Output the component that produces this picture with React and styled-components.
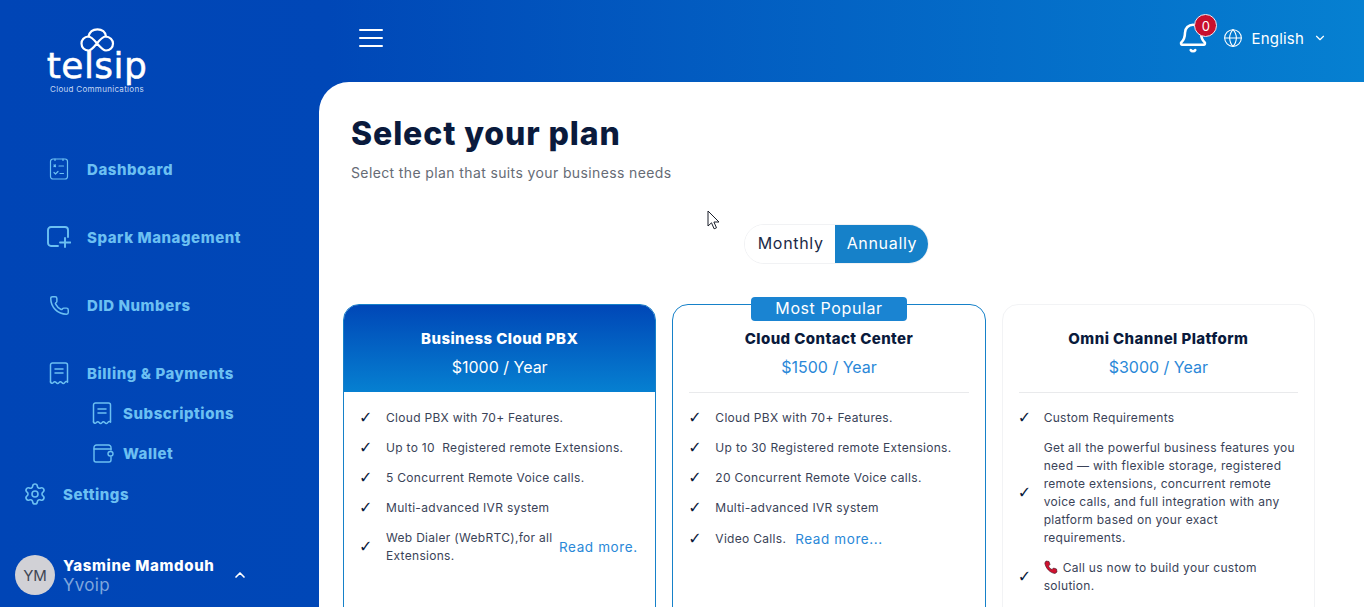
import React from 'react';
import styled, { createGlobalStyle } from 'styled-components';
import { Phone, Settings, ChevronUp, ChevronDown, Bell, Globe } from 'lucide-react';

const GlobalStyle = createGlobalStyle`
  html, body { margin: 0; padding: 0; height: 100%; overflow: hidden; }
  body { font-family: Inter, "Open Sans", "Liberation Sans", sans-serif; }
  * { box-sizing: border-box; }
`;

const Shell = styled.div`
  display: grid;
  grid-template-columns: 319px 1fr;
  height: 607px;
  overflow: hidden;
  background: linear-gradient(90deg, #0045b6 0%, #0047b7 24%, #0680d1 100%);
`;

/* sidebar */
const Sidebar = styled.aside`
  display: flex;
  flex-direction: column;
  height: 607px;
`;

const Logo = styled.div`
  display: flex;
  flex-direction: column;
  align-items: center;
  width: 194px;
  padding-top: 28px;
  height: 157px;
  color: #fff;
`;

const Wordmark = styled.div`
  font-family: "DejaVu Sans", sans-serif;
  font-size: 36px;
  line-height: 30px;
  letter-spacing: 0.4px;
  margin-top: -1px;
  -webkit-text-stroke: 0.5px #fff;
`;

const Tagline = styled.div`
  font-size: 8px;
  line-height: 10px;
  letter-spacing: 0.3px;
  margin-top: 3px;
  color: #c6d8f4;
`;

const Nav = styled.nav`
  display: flex;
  flex-direction: column;
`;

const NavItem = styled.a`
  display: flex;
  align-items: center;
  height: 24px;
  margin-bottom: ${p => p.$after || 0}px;
  padding-left: ${p => p.$left || 47}px;
  color: #6cc0f2;
  font-size: 15px;
  font-weight: 800;
  letter-spacing: 0.55px;
  svg { flex: none; }
`;

const NavIcon = styled.span`
  display: flex;
  justify-content: center;
  width: ${p => p.$w || 24}px;
  margin-right: ${p => p.$gap || 16}px;
`;

const UserRow = styled.div`
  display: flex;
  align-items: center;
  margin-top: 49px;
  padding-left: 15px;
`;

const Avatar = styled.div`
  display: flex;
  align-items: center;
  justify-content: center;
  width: 40px;
  height: 40px;
  border-radius: 50%;
  background: #d1d1d6;
  color: #3f4654;
  font-size: 15px;
`;

const UserText = styled.div`
  margin-left: 8px;
  width: 169px;
`;

const UserName = styled.div`
  color: #fff;
  font-size: 15px;
  font-weight: 800;
  line-height: 20px;
  letter-spacing: 0.65px;
`;

const UserOrg = styled.div`
  color: #7fa6dd;
  font-size: 17px;
  line-height: 19px;
  letter-spacing: 0.3px;
`;

/* right side */
const Main = styled.div`
  display: flex;
  flex-direction: column;
  min-width: 0;
`;

const Topbar = styled.header`
  display: flex;
  align-items: center;
  height: 82px;
  padding: 0 37px 6px 40px;
`;

const Burger = styled.div`
  display: flex;
  flex-direction: column;
  gap: 6px;
  width: 24px;
  span { display: block; height: 2px; background: #fff; border-radius: 1px; }
`;

const TopRight = styled.div`
  display: flex;
  align-items: center;
  margin-left: auto;
  color: #fff;
`;

const BellWrap = styled.div`
  position: relative;
  display: flex;
  margin-right: 14px;
`;

const BellBadge = styled.span`
  position: absolute;
  top: -8px;
  left: 17px;
  display: flex;
  align-items: center;
  justify-content: center;
  width: 23px;
  height: 23px;
  border-radius: 50%;
  background: #c8102e;
  border: 1px solid #e9eef6;
  color: #fff;
  font-size: 13px;
`;

const LangText = styled.span`
  margin: 0 9px 0 8px;
  font-size: 15px;
  letter-spacing: 0.2px;
`;

const Content = styled.main`
  position: relative;
  flex: 1;
  background: #fff;
  border-top-left-radius: 30px;
  padding: 32px 49px 0 24px;
  overflow: hidden;
`;

const Heading = styled.h1`
  margin: 0 0 0 8px;
  color: #0a1a3c;
  font-size: 32px;
  line-height: 40px;
  font-weight: 800;
  letter-spacing: 0.9px;
`;

const Sub = styled.p`
  margin: 9px 0 0 8px;
  color: #666b75;
  font-size: 14px;
  line-height: 20px;
  letter-spacing: 0.38px;
`;

const Pointer = styled.svg`
  position: absolute;
  left: 388px;
  top: 128px;
`;

const ToggleRow = styled.div`
  display: flex;
  justify-content: center;
  margin: 41px 0 40px;
  padding-left: 15px;
`;

const Toggle = styled.div`
  display: flex;
  height: 40px;
  border: 1px solid #f1f2f4;
  border-radius: 20px;
  overflow: hidden;
`;

const ToggleOption = styled.span`
  display: flex;
  align-items: center;
  padding: 0 11px 2px ${p => (p.$active ? 12 : 13)}px;
  background: ${p => (p.$active ? '#1681c9' : '#fff')};
  color: ${p => (p.$active ? '#fff' : '#1b2a47')};
  font-size: 16px;
  letter-spacing: 0.68px;
`;

const Cards = styled.div`
  display: grid;
  grid-template-columns: repeat(3, 1fr);
  gap: 16px;
`;

const Card = styled.section`
  position: relative;
  height: 360px;
  background: #fff;
  border: 1px solid ${p => (p.$variant === 'plain' ? '#f2f3f5' : '#1681c9')};
  border-radius: 16px;
  overflow: ${p => (p.$variant === 'popular' ? 'visible' : 'hidden')};
`;

const Badge = styled.div`
  position: absolute;
  top: -8px;
  left: 50%;
  transform: translateX(-50%);
  width: 156px;
  height: 24px;
  background: #1a84d2;
  border-radius: 4px;
  color: #fff;
  font-size: 16px;
  line-height: 23px;
  letter-spacing: 0.6px;
  text-align: center;
`;

const CardHead = styled.div`
  height: ${p => (p.$filled ? 87 : 88)}px;
  margin: ${p => (p.$filled ? '0' : '0 16px')};
  padding-top: 23px;
  text-align: center;
  color: ${p => (p.$filled ? '#fff' : '#0a1a3c')};
  background: ${p => (p.$filled ? 'linear-gradient(180deg, #0047b7 0%, #0680d1 100%)' : 'none')};
  border-bottom: ${p => (p.$filled ? 'none' : '1px solid #e9eaec')};
`;

const PlanName = styled.div`
  font-size: 15px;
  line-height: 22px;
  font-weight: 800;
  letter-spacing: 0.42px;
`;

const Price = styled.div`
  margin-top: 6px;
  font-size: 16px;
  line-height: 22px;
  color: ${p => (p.$filled ? '#fff' : '#2a88d8')};
`;

const Features = styled.ul`
  list-style: none;
  margin: 0;
  padding: ${p => (p.$filled ? 17 : 16)}px 16px 0 15px;
  display: flex;
  flex-direction: column;
  gap: 12px;
`;

const Feature = styled.li`
  display: flex;
  align-items: center;
  color: #3a4358;
  font-size: 12px;
  line-height: 18px;
  letter-spacing: 0.3px;
`;

const Tick = styled.span`
  flex: none;
  width: ${p => p.$w || 27}px;
  color: #0a1a3c;
  font-family: "DejaVu Sans", sans-serif;
  font-size: 16px;
  font-weight: 700;
  letter-spacing: 0;
`;

const FeatureText = styled.span`
  ${p => p.$width && `width: ${p.$width}px; flex: none;`}
`;

const ReadMore = styled.a`
  flex: none;
  margin-left: ${p => p.$gap || 12}px;
  color: #2a88d8;
  font-size: 13.5px;
  line-height: 20px;
  letter-spacing: 0.6px;
`;

const PhoneGlyph = styled.svg`
  vertical-align: -2px;
  margin-right: 5px;
`;

const iconProps = { fill: 'none', stroke: '#6cc0f2', strokeWidth: 1.5, strokeLinecap: 'round', strokeLinejoin: 'round' };

const ChecklistIcon = () => (
  <svg width="20" height="24" viewBox="0 0 20 24" {...iconProps} strokeWidth="1.2">
    <rect x="1.5" y="2" width="17" height="20" rx="2.5" />
    <path d="M6 2v1.5M14 2v1.5M5 8l1.5 1.5M6.5 8L5 9.5M10 9h4.5M5 15.5l1.5 1.500 2.500-2.500M11 16.500h3.500" />
  </svg>
);

const SquarePlusIcon = () => (
  <svg width="24" height="22" viewBox="0 0 24 22" {...iconProps} strokeWidth="1.9">
    <path d="M11 20H4a3 3 0 0 1-3-3V4a3 3 0 0 1 3-3h14a3 3 0 0 1 3 3v7" />
    <path d="M18 12v9M13 16.500H23.500" />
  </svg>
);

const ReceiptIcon = () => (
  <svg width="20" height="23" viewBox="0 0 20 23" {...iconProps}>
    <path d="M1.500 20V3a2 2 0 0 1 2-2h13a2 2 0 0 1 2 2v17" />
    <path d="M1.500 20q1.400 2.400 2.800 .6t2.900 0 2.800 0 2.800 0 2.900 0 2.800 -.6" />
    <path d="M6 7h8M6 11h8" />
  </svg>
);

const WalletIcon = () => (
  <svg width="21" height="19" viewBox="0 0 21 19" {...iconProps} strokeWidth="1.4">
    <path d="M18 6V3.500A2.500 2.500 0 0 0 15.500 1H3.500A2.500 2.500 0 0 0 1 3.500V16a2 2 0 0 0 2 2h13a2 2 0 0 0 2-2v-3" />
    <path d="M1 5h17" />
    <rect x="15" y="7.500" width="5" height="4.500" rx="2.200" />
  </svg>
);

const plans = [
  {
    name: 'Business Cloud PBX',
    price: '$1000 / Year',
    variant: 'filled',
    features: [
      'Cloud PBX with 70+ Features.',
      'Up to 10 \u00a0Registered remote Extensions.',
      '5 Concurrent Remote Voice calls.',
      'Multi-advanced IVR system',
    ],
    last: { text: 'Web Dialer (WebRTC),for all Extensions.', width: 168, link: 'Read more.', gap: 5 },
  },
  {
    name: 'Cloud Contact Center',
    price: '$1500 / Year',
    variant: 'popular',
    features: [
      'Cloud PBX with 70+ Features.',
      'Up to 30 Registered remote Extensions.',
      '20 Concurrent Remote Voice calls.',
      'Multi-advanced IVR system',
    ],
    last: { text: 'Video Calls.', link: 'Read more...', gap: 9 },
  },
];

const FeatureRow = ({ children, tick }) => (
  <Feature>
    <Tick $w={tick}>✓</Tick>
    {children}
  </Feature>
);

const PlanCard = ({ plan }) => {
  const filled = plan.variant === 'filled';
  return (
    <Card $variant={plan.variant}>
      {plan.variant === 'popular' && <Badge>Most Popular</Badge>}
      <CardHead $filled={filled}>
        <PlanName>{plan.name}</PlanName>
        <Price $filled={filled}>{plan.price}</Price>
      </CardHead>
      <Features $filled={filled}>
        {plan.features.map(f => <FeatureRow key={f}>{f}</FeatureRow>)}
        <FeatureRow>
          <FeatureText $width={plan.last.width}>{plan.last.text}</FeatureText>
          <ReadMore $gap={plan.last.gap}>{plan.last.link}</ReadMore>
        </FeatureRow>
      </Features>
    </Card>
  );
};

export default function App() {
  return (
    <Shell>
      <GlobalStyle />
      <Sidebar>
        <Logo>
          <svg width="35" height="24" viewBox="0 0 35 24" fill="none" stroke="#fff" strokeWidth="2.200" strokeLinecap="round">
            <path d="M8.500 8.500C4 8.500 1.500 12 1.500 15.500C1.500 19.500 4.500 22.500 8.500 22.500C14 22.500 19.500 8.500 25.500 8.500C30 8.500 33 12 33 15.500C33 19.500 30 22.500 26 22.500C20 22.500 14 8.500 8.500 8.500" />
            <path d="M8.500 8.500C9.500 4 13 1.300 17.500 1.300C22 1.300 25.500 4 26 8.500" />
          </svg>
          <Wordmark>telsip</Wordmark>
          <Tagline>Cloud Communications</Tagline>
        </Logo>
        <Nav>
          <NavItem $after={44}><NavIcon><ChecklistIcon /></NavIcon>Dashboard</NavItem>
          <NavItem $after={44}><NavIcon><SquarePlusIcon /></NavIcon>Spark Management</NavItem>
          <NavItem $after={44}><NavIcon><Phone size={21} strokeWidth={1.7} /></NavIcon>DID Numbers</NavItem>
          <NavItem $after={16}><NavIcon><ReceiptIcon /></NavIcon>Billing &amp; Payments</NavItem>
          <NavItem $after={16} $left={91}><NavIcon $w={22} $gap={10}><ReceiptIcon /></NavIcon>Subscriptions</NavItem>
          <NavItem $after={17} $left={92}><NavIcon $w={22} $gap={9}><WalletIcon /></NavIcon>Wallet</NavItem>
          <NavItem $left={24}><NavIcon $w={22} $gap={17}><Settings size={24} strokeWidth={1.6} /></NavIcon>Settings</NavItem>
        </Nav>
        <UserRow>
          <Avatar>YM</Avatar>
          <UserText>
            <UserName>Yasmine Mamdouh</UserName>
            <UserOrg>Yvoip</UserOrg>
          </UserText>
          <ChevronUp size={16} color="#fff" strokeWidth={2.5} />
        </UserRow>
      </Sidebar>
      <Main>
        <Topbar>
          <Burger><span /><span /><span /></Burger>
          <TopRight>
            <BellWrap>
              <Bell size={32} strokeWidth={1.9} />
              <BellBadge>0</BellBadge>
            </BellWrap>
            <Globe size={20} strokeWidth={1.3} />
            <LangText>English</LangText>
            <ChevronDown size={14} />
          </TopRight>
        </Topbar>
        <Content>
          <Heading>Select your plan</Heading>
          <Sub>Select the plan that suits your business needs</Sub>
          <Pointer width="14" height="21" viewBox="0 0 14 21">
            <path d="M1 1v15l3.500-3.200 2.600 6 2.400-1-2.600-5.800H12z" fill="#fff" stroke="#1a1f2b" strokeWidth="1" />
          </Pointer>
          <ToggleRow>
            <Toggle>
              <ToggleOption>Monthly</ToggleOption>
              <ToggleOption $active>Annually</ToggleOption>
            </Toggle>
          </ToggleRow>
          <Cards>
            {plans.map(p => <PlanCard key={p.name} plan={p} />)}
            <Card $variant="plain">
              <CardHead>
                <PlanName>Omni Channel Platform</PlanName>
                <Price>$3000 / Year</Price>
              </CardHead>
              <Features>
                <FeatureRow tick={26}>Custom Requirements</FeatureRow>
                <FeatureRow tick={26}>
                  <FeatureText>Get all the powerful business features you need — with flexible storage, registered remote extensions, concurrent remote voice calls, and full integration with any platform based on your exact requirements.</FeatureText>
                </FeatureRow>
                <FeatureRow tick={26}>
                  <FeatureText>
                    <PhoneGlyph width="14" height="14" viewBox="0 0 14 14">
                      <path d="M2 1l3 .5 1 3-1.500 1.500c.8 1.800 2 3 3.500 3.500L9.500 8l3 1 .5 3-2 1.500C6 13 1.500 8 .8 3z" fill="#d0122f" stroke="#3a1020" strokeWidth=".6" />
                    </PhoneGlyph>
                    Call us now to build your custom solution.
                  </FeatureText>
                </FeatureRow>
              </Features>
            </Card>
          </Cards>
        </Content>
      </Main>
    </Shell>
  );
}
